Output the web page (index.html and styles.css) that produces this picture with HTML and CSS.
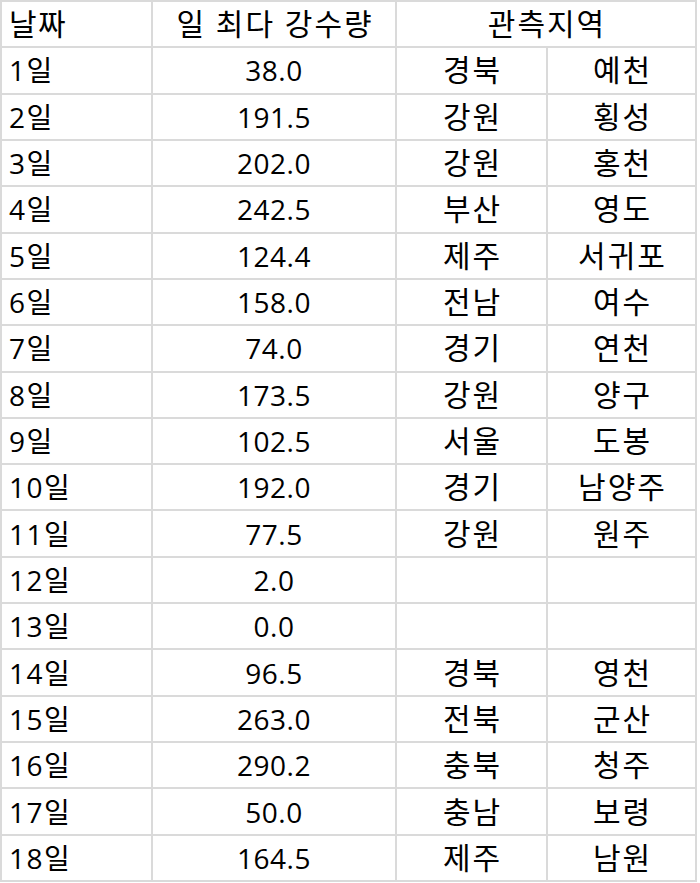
FILE: index.html
```html
<!DOCTYPE html>
<html lang="ko">
<head>
<meta charset="utf-8">
<link rel="stylesheet" href="styles.css">
</head>
<body>
<div class="sheet">
  <div class="cell left kr">날짜</div>
  <div class="cell kr">일 최다 강수량</div>
  <div class="cell span2 kr">관측지역</div>

  <div class="cell left">1일</div><div class="cell">38.0</div><div class="cell kr">경북</div><div class="cell kr">예천</div>
  <div class="cell left">2일</div><div class="cell">191.5</div><div class="cell kr">강원</div><div class="cell kr">횡성</div>
  <div class="cell left">3일</div><div class="cell">202.0</div><div class="cell kr">강원</div><div class="cell kr">홍천</div>
  <div class="cell left">4일</div><div class="cell">242.5</div><div class="cell kr">부산</div><div class="cell kr">영도</div>
  <div class="cell left">5일</div><div class="cell">124.4</div><div class="cell kr">제주</div><div class="cell kr">서귀포</div>
  <div class="cell left">6일</div><div class="cell">158.0</div><div class="cell kr">전남</div><div class="cell kr">여수</div>
  <div class="cell left">7일</div><div class="cell">74.0</div><div class="cell kr">경기</div><div class="cell kr">연천</div>
  <div class="cell left">8일</div><div class="cell">173.5</div><div class="cell kr">강원</div><div class="cell kr">양구</div>
  <div class="cell left">9일</div><div class="cell">102.5</div><div class="cell kr">서울</div><div class="cell kr">도봉</div>
  <div class="cell left">10일</div><div class="cell">192.0</div><div class="cell kr">경기</div><div class="cell kr">남양주</div>
  <div class="cell left">11일</div><div class="cell">77.5</div><div class="cell kr">강원</div><div class="cell kr">원주</div>
  <div class="cell left">12일</div><div class="cell">2.0</div><div class="cell"></div><div class="cell"></div>
  <div class="cell left">13일</div><div class="cell">0.0</div><div class="cell"></div><div class="cell"></div>
  <div class="cell left">14일</div><div class="cell">96.5</div><div class="cell kr">경북</div><div class="cell kr">영천</div>
  <div class="cell left">15일</div><div class="cell">263.0</div><div class="cell kr">전북</div><div class="cell kr">군산</div>
  <div class="cell left">16일</div><div class="cell">290.2</div><div class="cell kr">충북</div><div class="cell kr">청주</div>
  <div class="cell left">17일</div><div class="cell">50.0</div><div class="cell kr">충남</div><div class="cell kr">보령</div>
  <div class="cell left">18일</div><div class="cell">164.5</div><div class="cell kr">제주</div><div class="cell kr">남원</div>
</div>
</body>
</html>
```

FILE: styles.css
```css
html, body {
  margin: 0;
  padding: 0;
  background: #ffffff;
}

.sheet {
  display: grid;
  grid-template-columns: 149px 242px 149px 147px;
  grid-template-rows: repeat(19, 1fr);
  gap: 2px;
  padding: 2px;
  width: 697px;
  height: 882px;
  box-sizing: border-box;
  background: #dadada;
  font-family: "Open Sans", "Noto Sans CJK KR", sans-serif;
  font-size: 28px;
  letter-spacing: 0.5px;
  color: #000;
}

.cell {
  background: #ffffff;
  display: flex;
  align-items: center;
  justify-content: center;
  white-space: nowrap;
  line-height: 1;
}

.kr {
  font-size: 30px;
  letter-spacing: 2px;
  padding-left: 2px;
}

.left {
  justify-content: flex-start;
  padding-left: 7px;
  letter-spacing: 1.5px;
}

.left.kr {
  padding-left: 7px;
}

.span2 {
  grid-column: span 2;
}
```
